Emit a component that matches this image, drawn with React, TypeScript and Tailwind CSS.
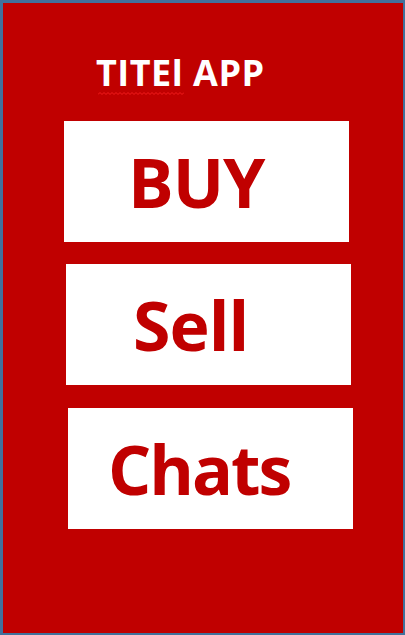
import React from "react";

const font = { fontFamily: '"Open Sans", "Noto Sans", sans-serif' };

function Squiggle() {
  const pts: string[] = [];
  for (let i = 0; i <= 43; i++) {
    pts.push(`${i * 2},${i % 2 === 0 ? 2.5 : 0.5}`);
  }
  return (
    <svg
      width="86"
      height="3"
      viewBox="0 0 86 3"
      className="absolute left-[2px] top-[41px]"
    >
      <polyline points={pts.join(" ")} fill="none" stroke="#f21c1c" strokeWidth="1" />
    </svg>
  );
}

export default function App() {
  return (
    <div
      className="w-[405px] h-[635px] bg-[#c00000] border-[#41719c] border-t-[3px] border-l-[3px] border-r-[2px] border-b-[2px] flex flex-col"
      style={font}
    >
      <div className="pl-[93px] pt-[48px] h-[118px] text-white font-bold text-[36px] leading-[44px] tracking-[0.5px]">
        <span className="relative inline-block whitespace-nowrap">
          TITEl APP
          <Squiggle />
        </span>
      </div>
      <div className="ml-[61px] w-[285px] h-[121px] bg-white flex items-center pl-[64px] text-[#c00000] font-bold text-[68px] tracking-[-1px] leading-none">
        BUY
      </div>
      <div className="ml-[63px] mt-[22px] w-[285px] h-[121px] bg-white flex items-center pl-[67px] text-[#c00000] font-bold text-[68px] tracking-[-1px] leading-none">
        Sell
      </div>
      <div className="ml-[65px] mt-[23px] w-[285px] h-[121px] bg-white flex items-center pl-[40px] text-[#c00000] font-bold text-[68px] tracking-[-2px] leading-none">
        Chats
      </div>
    </div>
  );
}
